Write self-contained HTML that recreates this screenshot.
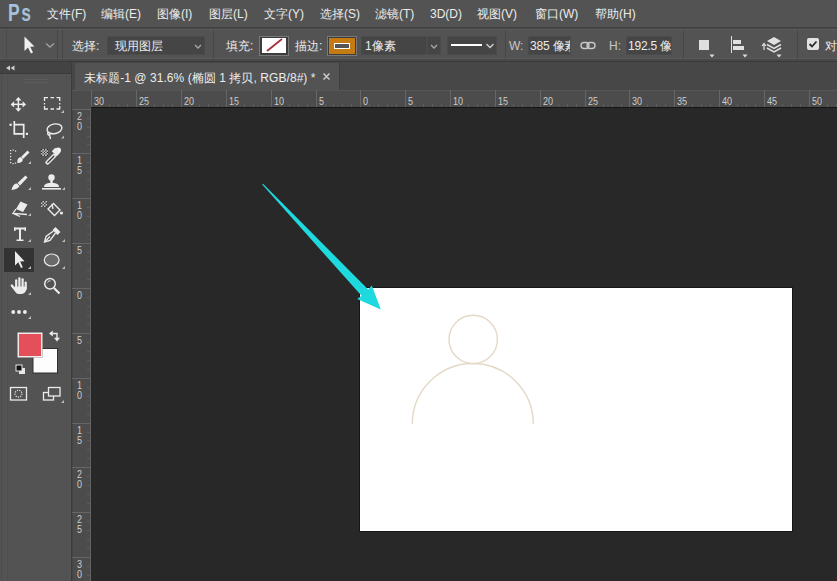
<!DOCTYPE html>
<html><head><meta charset="utf-8">
<style>
*{margin:0;padding:0;box-sizing:border-box}
html,body{width:837px;height:581px;overflow:hidden;background:#282828;font-family:"Liberation Sans",sans-serif;color:#e8e8e8}
.a{position:absolute}
#menubar{left:0;top:0;width:837px;height:27px;background:#535353}
#menubar .m{position:absolute;top:7px;font-size:12px;line-height:14px;color:#ececec;white-space:nowrap}
#optbar{left:0;top:27px;width:837px;height:35px;background:#535353;border-top:1px solid #404040;border-bottom:1px solid #3a3a3a}
#tools{left:0;top:62px;width:72px;height:519px;background:#535353}
#tabrow{left:72px;top:62px;width:765px;height:29px;background:#474747}
#rulertop{left:91px;top:90px;width:746px;height:18px;background:#4c4c4c;border-bottom:1px solid #151515;overflow:hidden}
#rulerleft{left:72px;top:108px;width:19px;height:473px;background:#4c4c4c;overflow:hidden}
#corner{left:72px;top:90px;width:19px;height:18px;background:#4c4c4c;border-top:1px solid #575757}
#canvasbg{left:91px;top:109px;width:746px;height:472px;background:#282828}
#doc{left:360px;top:288px;width:432px;height:243px;background:#fff}
.t12{font-size:12px;line-height:14px;white-space:nowrap;color:#ececec}
.box{background:#454545;border:1px solid #4b4b4b}
.tk{background:#666}
.tm{background:#5c5c5c}
.rl{font-size:10px;line-height:10px;color:#cdcdcd;transform:scaleX(0.9);transform-origin:0 0}
</style></head><body>
<div id="menubar" class="a">
  <div class="a" style="left:8px;top:1px;font-size:23px;line-height:24px;font-weight:bold;color:#a6c0da;letter-spacing:2px;transform:scaleX(0.76);transform-origin:0 0">Ps</div>
  <div class="m" style="left:47px">文件(F)</div>
  <div class="m" style="left:101px">编辑(E)</div>
  <div class="m" style="left:157px">图像(I)</div>
  <div class="m" style="left:209px">图层(L)</div>
  <div class="m" style="left:264px">文字(Y)</div>
  <div class="m" style="left:320px">选择(S)</div>
  <div class="m" style="left:375px">滤镜(T)</div>
  <div class="m" style="left:430px">3D(D)</div>
  <div class="m" style="left:477px">视图(V)</div>
  <div class="m" style="left:535px">窗口(W)</div>
  <div class="m" style="left:595px">帮助(H)</div>
</div>
<div id="optbar" class="a">
  <div class="a" style="left:0;top:0;width:837px;height:1px;background:#474747"></div>
  <div class="a" style="left:0;top:1px;width:837px;height:1px;background:#5a5a5a"></div>
  <div class="a" style="left:0;top:30px;width:837px;height:1px;background:#5a5a5a"></div>
  <div class="a" style="left:0;top:31px;width:837px;height:2px;background:#494949"></div>
  <div class="a" style="left:6px;top:1px;width:1px;height:31px;background:#4a4a4a"></div>
  <svg class="a" style="left:22px;top:7px" width="14" height="20" viewBox="0 0 14 20"><path d="M2.5 1.5 L2.5 16 L6 12.5 L9 18.5 L11 17.5 L8.2 11.8 L12.5 11.5 Z" fill="#f0f0f0"/></svg>
  <svg class="a" style="left:44px;top:13px" width="12" height="8" viewBox="0 0 12 8"><path d="M2 2.5 L6 6 L10 2.5" fill="none" stroke="#a0a0a0" stroke-width="1.4"/></svg>
  <div class="a" style="left:57px;top:2px;width:1px;height:29px;background:#474747"></div>
  <div class="a" style="left:62px;top:2px;width:1px;height:29px;background:#474747"></div>
  <div class="a t12" style="left:72px;top:11px">选择:</div>
  <div class="a box" style="left:107px;top:8px;width:98px;height:19px"></div>
  <div class="a t12" style="left:115px;top:11px">现用图层</div>
  <svg class="a" style="left:193px;top:14px" width="10" height="8" viewBox="0 0 10 8"><path d="M2 3 L5 6 L8 3" fill="none" stroke="#a9a9a9" stroke-width="1.3"/></svg>
  <div class="a" style="left:213px;top:2px;width:1px;height:29px;background:#474747"></div>
  <div class="a t12" style="left:226px;top:11px">填充:</div>
  <div class="a" style="left:259px;top:8px;width:30px;height:20px;border:1px solid #7a7a7a;background:#3c3c3c"></div>
  <div class="a" style="left:262px;top:10px;width:24px;height:15px;background:#fff"></div>
  <svg class="a" style="left:262px;top:10px" width="24" height="16"><line x1="5" y1="13" x2="20" y2="1" stroke="#a3303a" stroke-width="1.8"/></svg>
  <div class="a t12" style="left:295px;top:11px">描边:</div>
  <div class="a" style="left:327px;top:8px;width:30px;height:20px;border:1px solid #7a7a7a;background:#3c3c3c"></div>
  <div class="a" style="left:329px;top:10px;width:26px;height:16px;background:#c67a12"></div>
  <div class="a" style="left:334px;top:15px;width:16px;height:6px;border:1.5px solid #fff;background:#555"></div>
  <div class="a box" style="left:361px;top:8px;width:66px;height:19px"></div>
  <div class="a t12" style="left:365px;top:11px">1像素</div>
  <div class="a box" style="left:427px;top:8px;width:14px;height:19px"></div>
  <svg class="a" style="left:429px;top:14px" width="10" height="8" viewBox="0 0 10 8"><path d="M2 3 L5 6 L8 3" fill="none" stroke="#a9a9a9" stroke-width="1.3"/></svg>
  <div class="a box" style="left:447px;top:8px;width:50px;height:19px"></div>
  <div class="a" style="left:451px;top:16px;width:31px;height:2px;background:#fff"></div>
  <svg class="a" style="left:485px;top:14px" width="10" height="8" viewBox="0 0 10 8"><path d="M1.5 2 L5 5.5 L8.5 2" fill="none" stroke="#d0d0d0" stroke-width="1.4"/></svg>
  <div class="a" style="left:505px;top:2px;width:1px;height:29px;background:#474747"></div>
  <div class="a t12" style="left:509px;top:11px;color:#c8c8c8">W:</div>
  <div class="a box" style="left:528px;top:8px;width:43px;height:19px;overflow:hidden"><div class="a t12" style="left:1px;top:2px;letter-spacing:-0.2px">385 像素</div></div>
  <svg class="a" style="left:580px;top:13px" width="16" height="10" viewBox="0 0 16 10"><rect x="1" y="1.5" width="8" height="6" rx="3" fill="none" stroke="#c8c8c8" stroke-width="1.4"/><rect x="7" y="1.5" width="8" height="6" rx="3" fill="none" stroke="#c8c8c8" stroke-width="1.4"/></svg>
  <div class="a t12" style="left:609px;top:11px;color:#c8c8c8">H:</div>
  <div class="a box" style="left:626px;top:8px;width:46px;height:19px;overflow:hidden"><div class="a t12" style="left:1px;top:2px;letter-spacing:-0.2px">192.5 像素</div></div>
  <div class="a" style="left:683px;top:2px;width:1px;height:29px;background:#474747"></div>
  <div class="a" style="left:699px;top:12px;width:10px;height:10px;background:#e0e0e0"></div>
  <svg class="a" style="left:709px;top:26px" width="6" height="4"><path d="M0.5 0.5 L5.5 0.5 L3 3.5Z" fill="#ddd"/></svg>
  <div class="a" style="left:731px;top:8px;width:1px;height:17px;background:#e0e0e0"></div>
  <div class="a" style="left:733px;top:12px;width:8px;height:4px;background:#e0e0e0"></div>
  <div class="a" style="left:733px;top:18px;width:11px;height:4px;background:#e0e0e0"></div>
  <svg class="a" style="left:742px;top:26px" width="6" height="4"><path d="M0.5 0.5 L5.5 0.5 L3 3.5Z" fill="#ddd"/></svg>
  <svg class="a" style="left:761px;top:8px" width="24" height="20" viewBox="0 0 24 20"><path d="M13 1 L20 5 L13 9 L6 5Z" fill="#e0e0e0"/><path d="M6 8.5 L13 12.5 L20 8.5" fill="none" stroke="#e0e0e0" stroke-width="1.5"/><path d="M6 12 L13 16 L20 12" fill="none" stroke="#e0e0e0" stroke-width="1.5"/><path d="M3 14 L3 8 M1 10 L3 7.5 L5 10" fill="none" stroke="#e0e0e0" stroke-width="1.2"/></svg>
  <svg class="a" style="left:776px;top:26px" width="6" height="4"><path d="M0.5 0.5 L5.5 0.5 L3 3.5Z" fill="#ddd"/></svg>
  <div class="a" style="left:797px;top:2px;width:1px;height:29px;background:#474747"></div>
  <div class="a" style="left:807px;top:10px;width:12px;height:12px;background:#e2e2e2;border-radius:2px"></div>
  <svg class="a" style="left:807px;top:10px" width="12" height="12"><path d="M2.5 6 L5 8.5 L9.5 3.5" fill="none" stroke="#2a2a2a" stroke-width="1.8"/></svg>
  <div class="a t12" style="left:825px;top:11px">对齐边缘</div>
</div>
<div id="tools" class="a">
<svg class="a" style="left:0;top:0" width="72" height="519" viewBox="0 62 72 519">
  <rect x="0" y="62" width="72" height="12" fill="#434343"/>
  <rect x="0" y="73" width="72" height="1" fill="#3a3a3a"/>
  <rect x="71" y="62" width="1" height="519" fill="#3c3c3c"/>
  <rect x="1" y="74" width="1" height="507" fill="#4c4c4c"/>
  <rect x="7" y="75" width="1" height="506" fill="#4f4f4f"/>
  <rect x="66" y="75" width="1" height="506" fill="#4f4f4f"/>
  <path d="M6 68 L10 65.5 L10 70.5Z M10.5 68 L14.5 65.5 L14.5 70.5Z" fill="#cfcfcf"/>
  <rect x="24" y="79" width="24" height="1" fill="#5c5c5c"/>
  <rect x="24" y="82" width="24" height="1" fill="#5c5c5c"/>
  <!-- move -->
  <g fill="#ececec">
    <rect x="17.6" y="99" width="1.5" height="11"/>
    <rect x="12.5" y="103.6" width="11.5" height="1.5"/>
    <path d="M18.35 97 L21.5 100.5 L15.2 100.5Z M18.35 111.8 L21.5 108.3 L15.2 108.3Z M10.6 104.4 L14.1 101.2 L14.1 107.6Z M26.1 104.4 L22.6 101.2 L22.6 107.6Z"/>
  </g>
  <!-- marquee -->
  <g fill="none" stroke="#ececec" stroke-width="1.3">
    <path d="M44.5 101 L44.5 97.6 L48 97.6 M50.5 97.6 L54 97.6 M56.5 97.6 L59.7 97.6 L59.7 101 M59.7 103 L59.7 104.5 M59.7 106 L59.7 109 L56.5 109 M54 109 L50.5 109 M48 109 L44.5 109 L44.5 106 M44.5 104.5 L44.5 103"/>
  </g>
  <path d="M64 110 L64 113 L61 113Z" fill="#bdbdbd"/>
  <!-- crop -->
  <g fill="none" stroke="#ececec" stroke-width="1.7">
    <path d="M14.3 121 L14.3 133.8 L23.7 133.8"/>
    <path d="M14.3 124.7 L23.7 124.7 L23.7 138"/>
  </g>
  <rect x="9.5" y="123.7" width="2.2" height="2.2" fill="#ececec"/>
  <rect x="25.8" y="132.8" width="2.2" height="2.2" fill="#ececec"/>
  <!-- lasso -->
  <g fill="none" stroke="#ececec" stroke-width="1.4">
    <ellipse cx="54.5" cy="128.8" rx="7.5" ry="4.8" transform="rotate(-12 54.5 128.8)"/>
    <path d="M48 132 C47 135 49 136 50 134 M49.5 134.5 L50.5 139"/>
  </g>
  <path d="M64 135.5 L64 138.5 L61 138.5Z" fill="#bdbdbd"/>
  <!-- quick select -->
  <g fill="#ececec">
    <rect x="10" y="150" width="1.2" height="1.2"/><rect x="10" y="153" width="1.2" height="1.2"/><rect x="10" y="156" width="1.2" height="1.2"/><rect x="10" y="159" width="1.2" height="1.2"/><rect x="10" y="162" width="1.2" height="1.2"/>
    <rect x="12.5" y="149.5" width="1.2" height="1.2"/><rect x="15" y="150.5" width="1.2" height="1.2"/><rect x="12.5" y="163" width="1.2" height="1.2"/><rect x="15" y="162.5" width="1.2" height="1.2"/>
    <path d="M27.5 150.5 L29.5 152.5 L23 159 L21 157Z"/>
    <path d="M21 157.3 C18 157.3 17 160 17.5 163 C20.5 163 23 161.5 22.8 159.2Z"/>
  </g>
  <path d="M31 161 L31 164 L28 164Z" fill="#bdbdbd"/>
  <!-- eyedropper -->
  <g>
    <rect x="41" y="149" width="7" height="7" fill="#f0f0f0"/>
    <path d="M41 149h1.4v1.4h-1.4z M43.8 149h1.4v1.4h-1.4z M46.6 149h1.4v1.4h-1.4z M42.4 150.4h1.4v1.4h-1.4z M45.2 150.4h1.4v1.4h-1.4z M41 151.8h1.4v1.4h-1.4z M43.8 151.8h1.4v1.4h-1.4z M46.6 151.8h1.4v1.4h-1.4z M42.4 153.2h1.4v1.4h-1.4z M45.2 153.2h1.4v1.4h-1.4z M41 154.6h1.4v1.4h-1.4z M43.8 154.6h1.4v1.4h-1.4z M46.6 154.6h1.4v1.4h-1.4z" fill="#222"/>
    <circle cx="58.2" cy="150.3" r="2.8" fill="#f2f2f2"/>
    <path d="M51.8 151.2 L55.2 147.8 L60.2 152.8 L56.8 156.2Z" fill="#ececec"/>
    <path d="M54.5 155.5 L47.5 162.5" stroke="#e6e6e6" stroke-width="4.2" stroke-linecap="round"/>
    <path d="M53.8 156.2 L47.8 162.2" stroke="#3a3a3a" stroke-width="1.3" stroke-linecap="round"/>
  </g>
  <!-- brush -->
  <g fill="#ececec">
    <path d="M25.5 175.5 L27.5 177.5 L20 185.5 L17.5 183Z"/>
    <path d="M17 183.5 C14 183.5 12.5 186 11.5 190 C15.5 189.5 18.5 188.5 19.5 186Z"/>
  </g>
  <path d="M31 187 L31 190 L28 190Z" fill="#bdbdbd"/>
  <!-- stamp -->
  <g fill="#ececec">
    <circle cx="51.5" cy="177.5" r="3.2"/>
    <rect x="50.3" y="179" width="2.4" height="4"/>
    <path d="M44 187 C44 184 47 183 50 183 L53 183 C56 183 59 184 59 187Z"/>
    <rect x="42" y="188" width="19" height="1.6"/>
  </g>
  <path d="M65 187 L65 190 L62 190Z" fill="#bdbdbd"/>
  <!-- eraser -->
  <g>
    <path d="M20.5 201.5 L27.5 204.5 L23 212 L16 209Z" fill="#ececec"/>
    <path d="M16 209 L13 213.5 L27 214.5 M13 213.5 L20 216.5" fill="none" stroke="#ececec" stroke-width="1.3"/>
  </g>
  <path d="M31 213 L31 216 L28 216Z" fill="#bdbdbd"/>
  <!-- bucket -->
  <g>
    <rect x="41" y="201" width="6" height="6" fill="#cfcfcf"/>
    <path d="M41 201h1.5v1.5h-1.5z M44 201h1.5v1.5h-1.5z M42.5 202.5h1.5v1.5h-1.5z M45.5 202.5h1.5v1.5h-1.5z M41 204h1.5v1.5h-1.5z M44 204h1.5v1.5h-1.5z M42.5 205.5h1.5v1.5h-1.5z M45.5 205.5h1.5v1.5h-1.5z" fill="#333"/>
    <path d="M53.5 203.5 L60 210 L54.5 215.5 L48 209Z" fill="none" stroke="#ececec" stroke-width="1.4"/>
    <path d="M52 204 L53 209" stroke="#ececec" stroke-width="1.3"/>
    <circle cx="61.5" cy="213" r="1.6" fill="#ececec"/>
  </g>
  <!-- T -->
  <g fill="#ececec">
    <rect x="14" y="227.5" width="12" height="2"/>
    <rect x="14" y="227.5" width="1.5" height="3.5"/>
    <rect x="24.5" y="227.5" width="1.5" height="3.5"/>
    <rect x="19" y="228" width="2" height="12"/>
    <rect x="16.5" y="239.5" width="7" height="1.5"/>
  </g>
  <path d="M31 239 L31 242 L28 242Z" fill="#bdbdbd"/>
  <!-- pen -->
  <g fill="none" stroke="#ececec" stroke-width="1.3">
    <path d="M55.5 228 L59.5 232 L57.5 234 L53.5 230Z" fill="#ececec"/>
    <path d="M53.5 231 L46 236.5 L44.5 242 L50 240.5 L55.5 233"/>
    <path d="M44.8 241.7 L50 236.5"/>
  </g>
  <path d="M65 239 L65 242 L62 242Z" fill="#bdbdbd"/>
  <!-- selected path select -->
  <rect x="4" y="248" width="30" height="24" fill="#333333"/>
  <path d="M15 251 L15 265.5 L18.3 262.2 L21 268 L22.8 267.2 L20.2 261.5 L24.5 261.3Z" fill="#ececec"/>
  <path d="M31 266 L31 269 L28 269Z" fill="#bdbdbd"/>
  <!-- ellipse -->
  <ellipse cx="51.7" cy="260" rx="7.4" ry="6" fill="#6a6a6a" stroke="#ececec" stroke-width="1.2"/>
  <path d="M65 266 L65 269 L62 269Z" fill="#bdbdbd"/>
  <!-- hand -->
  <g stroke="#ececec" stroke-linecap="round" fill="none">
    <path d="M16.2 280.3 L16.2 288" stroke-width="2.2"/>
    <path d="M19.4 278.3 L19.4 288" stroke-width="2.2"/>
    <path d="M22.6 279.3 L22.6 288" stroke-width="2.2"/>
    <path d="M25.7 282.6 L25.7 289" stroke-width="2.2"/>
    <path d="M11.8 285.6 L15.5 290" stroke-width="2.4"/>
  </g>
  <path d="M14.8 286.5 L26.8 286.5 L26.2 290 C25.5 292.5 23.5 294 21 294 L19 294 C16.5 294 15 292 14.5 290Z" fill="#ececec"/>
  <path d="M31 292 L31 295 L28 295Z" fill="#bdbdbd"/>
  <!-- zoom -->
  <g fill="none" stroke="#ececec" stroke-width="1.5">
    <circle cx="50" cy="283.8" r="5.3"/>
    <path d="M54 288 L59.5 293.5" stroke-width="2.2"/>
    <path d="M47.5 282.5 C48 281 49.5 280.5 50.5 281" stroke-width="1"/>
  </g>
  <!-- dots -->
  <g fill="#ececec"><circle cx="13.2" cy="312" r="1.9"/><circle cx="19" cy="312" r="1.9"/><circle cx="24.9" cy="312" r="1.9"/></g>
  <path d="M31 316 L31 319 L28 319Z" fill="#bdbdbd"/>
  <!-- colors -->
  <rect x="33" y="348.5" width="24.5" height="24.5" fill="#fdfdfd" stroke="#303030" stroke-width="1"/>
  <rect x="17.5" y="332.5" width="25" height="25" fill="#303030"/>
  <rect x="18.2" y="333.2" width="23.6" height="23.6" fill="#e3505a" stroke="#fafafa" stroke-width="1.4"/>
  <path d="M52.5 333.5 L57 333.5 L57 338" fill="none" stroke="#ececec" stroke-width="1.4"/>
  <path d="M49 333.5 L52.8 330.5 L52.8 336.5Z" fill="#ececec"/>
  <path d="M57 341.5 L54 337.7 L60 337.7Z" fill="#ececec"/>
  <rect x="19" y="368" width="6" height="6" fill="#e8e8e8"/>
  <rect x="16" y="365" width="6" height="6" fill="#111" stroke="#e8e8e8" stroke-width="1"/>
  <!-- quick mask -->
  <rect x="10.5" y="387.5" width="16" height="12.5" fill="none" stroke="#ececec" stroke-width="1.3"/>
  <circle cx="18.5" cy="393.7" r="3.5" fill="none" stroke="#ececec" stroke-width="1.2" stroke-dasharray="1.2 1.2"/>
  <!-- screen mode -->
  <rect x="43.5" y="392.5" width="10" height="7.5" fill="#535353" stroke="#ececec" stroke-width="1.3"/>
  <rect x="48.5" y="387.5" width="11.5" height="8.5" fill="#535353" stroke="#ececec" stroke-width="1.3"/>
  <path d="M64 400 L64 403 L61 403Z" fill="#bdbdbd"/>
</svg>
</div>
<div id="tabrow" class="a">
  <div class="a" style="left:3px;top:1px;width:265px;height:27px;background:#535353;border-right:1px solid #3f3f3f"></div>
  <div class="a t12" style="left:12px;top:9px;color:#ececec;letter-spacing:0.06px">未标题-1 @ 31.6% (椭圆 1 拷贝, RGB/8#) *</div>
  <svg class="a" style="left:250px;top:10px" width="9" height="9" viewBox="0 0 9 9"><path d="M1.5 1.5 L7.5 7.5 M7.5 1.5 L1.5 7.5" stroke="#c8c8c8" stroke-width="1.5"/></svg>
</div>
<div id="rulertop" class="a">
<div class="a" style="left:0;top:0;width:746px;height:1px;background:#575757"></div>
<div class="a tk" style="left:0px;top:0;width:1px;height:17px"></div>
<div class="a rl" style="left:3px;top:7px">30</div>
<div class="a tm" style="left:9px;top:14px;width:1px;height:3px"></div>
<div class="a tm" style="left:18px;top:14px;width:1px;height:3px"></div>
<div class="a tm" style="left:27px;top:14px;width:1px;height:3px"></div>
<div class="a tm" style="left:36px;top:14px;width:1px;height:3px"></div>
<div class="a tk" style="left:45px;top:0;width:1px;height:17px"></div>
<div class="a rl" style="left:48px;top:7px">25</div>
<div class="a tm" style="left:54px;top:14px;width:1px;height:3px"></div>
<div class="a tm" style="left:63px;top:14px;width:1px;height:3px"></div>
<div class="a tm" style="left:72px;top:14px;width:1px;height:3px"></div>
<div class="a tm" style="left:81px;top:14px;width:1px;height:3px"></div>
<div class="a tk" style="left:90px;top:0;width:1px;height:17px"></div>
<div class="a rl" style="left:93px;top:7px">20</div>
<div class="a tm" style="left:99px;top:14px;width:1px;height:3px"></div>
<div class="a tm" style="left:108px;top:14px;width:1px;height:3px"></div>
<div class="a tm" style="left:117px;top:14px;width:1px;height:3px"></div>
<div class="a tm" style="left:126px;top:14px;width:1px;height:3px"></div>
<div class="a tk" style="left:135px;top:0;width:1px;height:17px"></div>
<div class="a rl" style="left:138px;top:7px">15</div>
<div class="a tm" style="left:144px;top:14px;width:1px;height:3px"></div>
<div class="a tm" style="left:153px;top:14px;width:1px;height:3px"></div>
<div class="a tm" style="left:162px;top:14px;width:1px;height:3px"></div>
<div class="a tm" style="left:171px;top:14px;width:1px;height:3px"></div>
<div class="a tk" style="left:180px;top:0;width:1px;height:17px"></div>
<div class="a rl" style="left:183px;top:7px">10</div>
<div class="a tm" style="left:189px;top:14px;width:1px;height:3px"></div>
<div class="a tm" style="left:198px;top:14px;width:1px;height:3px"></div>
<div class="a tm" style="left:207px;top:14px;width:1px;height:3px"></div>
<div class="a tm" style="left:216px;top:14px;width:1px;height:3px"></div>
<div class="a tk" style="left:225px;top:0;width:1px;height:17px"></div>
<div class="a rl" style="left:228px;top:7px">5</div>
<div class="a tm" style="left:234px;top:14px;width:1px;height:3px"></div>
<div class="a tm" style="left:242px;top:14px;width:1px;height:3px"></div>
<div class="a tm" style="left:251px;top:14px;width:1px;height:3px"></div>
<div class="a tm" style="left:260px;top:14px;width:1px;height:3px"></div>
<div class="a tk" style="left:269px;top:0;width:1px;height:17px"></div>
<div class="a rl" style="left:272px;top:7px">0</div>
<div class="a tm" style="left:278px;top:14px;width:1px;height:3px"></div>
<div class="a tm" style="left:287px;top:14px;width:1px;height:3px"></div>
<div class="a tm" style="left:296px;top:14px;width:1px;height:3px"></div>
<div class="a tm" style="left:305px;top:14px;width:1px;height:3px"></div>
<div class="a tk" style="left:314px;top:0;width:1px;height:17px"></div>
<div class="a rl" style="left:317px;top:7px">5</div>
<div class="a tm" style="left:323px;top:14px;width:1px;height:3px"></div>
<div class="a tm" style="left:332px;top:14px;width:1px;height:3px"></div>
<div class="a tm" style="left:341px;top:14px;width:1px;height:3px"></div>
<div class="a tm" style="left:350px;top:14px;width:1px;height:3px"></div>
<div class="a tk" style="left:359px;top:0;width:1px;height:17px"></div>
<div class="a rl" style="left:362px;top:7px">10</div>
<div class="a tm" style="left:368px;top:14px;width:1px;height:3px"></div>
<div class="a tm" style="left:377px;top:14px;width:1px;height:3px"></div>
<div class="a tm" style="left:386px;top:14px;width:1px;height:3px"></div>
<div class="a tm" style="left:395px;top:14px;width:1px;height:3px"></div>
<div class="a tk" style="left:404px;top:0;width:1px;height:17px"></div>
<div class="a rl" style="left:407px;top:7px">15</div>
<div class="a tm" style="left:413px;top:14px;width:1px;height:3px"></div>
<div class="a tm" style="left:422px;top:14px;width:1px;height:3px"></div>
<div class="a tm" style="left:431px;top:14px;width:1px;height:3px"></div>
<div class="a tm" style="left:440px;top:14px;width:1px;height:3px"></div>
<div class="a tk" style="left:449px;top:0;width:1px;height:17px"></div>
<div class="a rl" style="left:452px;top:7px">20</div>
<div class="a tm" style="left:458px;top:14px;width:1px;height:3px"></div>
<div class="a tm" style="left:467px;top:14px;width:1px;height:3px"></div>
<div class="a tm" style="left:476px;top:14px;width:1px;height:3px"></div>
<div class="a tm" style="left:485px;top:14px;width:1px;height:3px"></div>
<div class="a tk" style="left:494px;top:0;width:1px;height:17px"></div>
<div class="a rl" style="left:497px;top:7px">25</div>
<div class="a tm" style="left:503px;top:14px;width:1px;height:3px"></div>
<div class="a tm" style="left:512px;top:14px;width:1px;height:3px"></div>
<div class="a tm" style="left:521px;top:14px;width:1px;height:3px"></div>
<div class="a tm" style="left:530px;top:14px;width:1px;height:3px"></div>
<div class="a tk" style="left:538px;top:0;width:1px;height:17px"></div>
<div class="a rl" style="left:541px;top:7px">30</div>
<div class="a tm" style="left:547px;top:14px;width:1px;height:3px"></div>
<div class="a tm" style="left:556px;top:14px;width:1px;height:3px"></div>
<div class="a tm" style="left:565px;top:14px;width:1px;height:3px"></div>
<div class="a tm" style="left:574px;top:14px;width:1px;height:3px"></div>
<div class="a tk" style="left:583px;top:0;width:1px;height:17px"></div>
<div class="a rl" style="left:586px;top:7px">35</div>
<div class="a tm" style="left:592px;top:14px;width:1px;height:3px"></div>
<div class="a tm" style="left:601px;top:14px;width:1px;height:3px"></div>
<div class="a tm" style="left:610px;top:14px;width:1px;height:3px"></div>
<div class="a tm" style="left:619px;top:14px;width:1px;height:3px"></div>
<div class="a tk" style="left:628px;top:0;width:1px;height:17px"></div>
<div class="a rl" style="left:631px;top:7px">40</div>
<div class="a tm" style="left:637px;top:14px;width:1px;height:3px"></div>
<div class="a tm" style="left:646px;top:14px;width:1px;height:3px"></div>
<div class="a tm" style="left:655px;top:14px;width:1px;height:3px"></div>
<div class="a tm" style="left:664px;top:14px;width:1px;height:3px"></div>
<div class="a tk" style="left:673px;top:0;width:1px;height:17px"></div>
<div class="a rl" style="left:676px;top:7px">45</div>
<div class="a tm" style="left:682px;top:14px;width:1px;height:3px"></div>
<div class="a tm" style="left:691px;top:14px;width:1px;height:3px"></div>
<div class="a tm" style="left:700px;top:14px;width:1px;height:3px"></div>
<div class="a tm" style="left:709px;top:14px;width:1px;height:3px"></div>
<div class="a tk" style="left:718px;top:0;width:1px;height:17px"></div>
<div class="a rl" style="left:721px;top:7px">50</div>
<div class="a tm" style="left:727px;top:14px;width:1px;height:3px"></div>
<div class="a tm" style="left:736px;top:14px;width:1px;height:3px"></div>
<div class="a tm" style="left:745px;top:14px;width:1px;height:3px"></div>
</div>
<div id="rulerleft" class="a">
<div class="a" style="left:18px;top:0;width:1px;height:473px;background:#626262"></div><div class="a" style="left:0;top:0;width:1px;height:473px;background:#444"></div>
<div class="a tk" style="left:0;top:1px;width:18px;height:1px"></div>
<div class="a rl" style="left:5px;top:4px">2</div>
<div class="a rl" style="left:5px;top:14px">0</div>
<div class="a tm" style="left:15px;top:10px;width:4px;height:1px"></div>
<div class="a tm" style="left:15px;top:19px;width:4px;height:1px"></div>
<div class="a tm" style="left:15px;top:28px;width:4px;height:1px"></div>
<div class="a tm" style="left:15px;top:36px;width:4px;height:1px"></div>
<div class="a tk" style="left:0;top:45px;width:18px;height:1px"></div>
<div class="a rl" style="left:5px;top:48px">1</div>
<div class="a rl" style="left:5px;top:58px">5</div>
<div class="a tm" style="left:15px;top:54px;width:4px;height:1px"></div>
<div class="a tm" style="left:15px;top:63px;width:4px;height:1px"></div>
<div class="a tm" style="left:15px;top:72px;width:4px;height:1px"></div>
<div class="a tm" style="left:15px;top:81px;width:4px;height:1px"></div>
<div class="a tk" style="left:0;top:90px;width:18px;height:1px"></div>
<div class="a rl" style="left:5px;top:93px">1</div>
<div class="a rl" style="left:5px;top:103px">0</div>
<div class="a tm" style="left:15px;top:99px;width:4px;height:1px"></div>
<div class="a tm" style="left:15px;top:108px;width:4px;height:1px"></div>
<div class="a tm" style="left:15px;top:117px;width:4px;height:1px"></div>
<div class="a tm" style="left:15px;top:126px;width:4px;height:1px"></div>
<div class="a tk" style="left:0;top:135px;width:18px;height:1px"></div>
<div class="a rl" style="left:5px;top:138px">5</div>
<div class="a tm" style="left:15px;top:144px;width:4px;height:1px"></div>
<div class="a tm" style="left:15px;top:153px;width:4px;height:1px"></div>
<div class="a tm" style="left:15px;top:162px;width:4px;height:1px"></div>
<div class="a tm" style="left:15px;top:171px;width:4px;height:1px"></div>
<div class="a tk" style="left:0;top:180px;width:18px;height:1px"></div>
<div class="a rl" style="left:5px;top:183px">0</div>
<div class="a tm" style="left:15px;top:189px;width:4px;height:1px"></div>
<div class="a tm" style="left:15px;top:198px;width:4px;height:1px"></div>
<div class="a tm" style="left:15px;top:207px;width:4px;height:1px"></div>
<div class="a tm" style="left:15px;top:216px;width:4px;height:1px"></div>
<div class="a tk" style="left:0;top:225px;width:18px;height:1px"></div>
<div class="a rl" style="left:5px;top:228px">5</div>
<div class="a tm" style="left:15px;top:234px;width:4px;height:1px"></div>
<div class="a tm" style="left:15px;top:243px;width:4px;height:1px"></div>
<div class="a tm" style="left:15px;top:252px;width:4px;height:1px"></div>
<div class="a tm" style="left:15px;top:261px;width:4px;height:1px"></div>
<div class="a tk" style="left:0;top:270px;width:18px;height:1px"></div>
<div class="a rl" style="left:5px;top:273px">1</div>
<div class="a rl" style="left:5px;top:283px">0</div>
<div class="a tm" style="left:15px;top:279px;width:4px;height:1px"></div>
<div class="a tm" style="left:15px;top:288px;width:4px;height:1px"></div>
<div class="a tm" style="left:15px;top:297px;width:4px;height:1px"></div>
<div class="a tm" style="left:15px;top:306px;width:4px;height:1px"></div>
<div class="a tk" style="left:0;top:315px;width:18px;height:1px"></div>
<div class="a rl" style="left:5px;top:318px">1</div>
<div class="a rl" style="left:5px;top:328px">5</div>
<div class="a tm" style="left:15px;top:324px;width:4px;height:1px"></div>
<div class="a tm" style="left:15px;top:332px;width:4px;height:1px"></div>
<div class="a tm" style="left:15px;top:341px;width:4px;height:1px"></div>
<div class="a tm" style="left:15px;top:350px;width:4px;height:1px"></div>
<div class="a tk" style="left:0;top:359px;width:18px;height:1px"></div>
<div class="a rl" style="left:5px;top:362px">2</div>
<div class="a rl" style="left:5px;top:372px">0</div>
<div class="a tm" style="left:15px;top:368px;width:4px;height:1px"></div>
<div class="a tm" style="left:15px;top:377px;width:4px;height:1px"></div>
<div class="a tm" style="left:15px;top:386px;width:4px;height:1px"></div>
<div class="a tm" style="left:15px;top:395px;width:4px;height:1px"></div>
<div class="a tk" style="left:0;top:404px;width:18px;height:1px"></div>
<div class="a rl" style="left:5px;top:407px">2</div>
<div class="a rl" style="left:5px;top:417px">5</div>
<div class="a tm" style="left:15px;top:413px;width:4px;height:1px"></div>
<div class="a tm" style="left:15px;top:422px;width:4px;height:1px"></div>
<div class="a tm" style="left:15px;top:431px;width:4px;height:1px"></div>
<div class="a tm" style="left:15px;top:440px;width:4px;height:1px"></div>
<div class="a tk" style="left:0;top:449px;width:18px;height:1px"></div>
<div class="a rl" style="left:5px;top:452px">3</div>
<div class="a rl" style="left:5px;top:462px">0</div>
<div class="a tm" style="left:15px;top:458px;width:4px;height:1px"></div>
<div class="a tm" style="left:15px;top:467px;width:4px;height:1px"></div>
</div>
<div id="corner" class="a"></div>
<div id="canvasbg" class="a"></div>
<div id="doc" class="a"></div>
<svg class="a" style="left:0;top:0" width="837" height="581">
  <rect x="359.5" y="287.5" width="433" height="244" fill="none" stroke="#161616" stroke-width="1"/>
  <rect x="360" y="288" width="432" height="243" fill="#fff"/>
  <circle cx="473.2" cy="339.5" r="24.2" fill="none" stroke="#e4d9c6" stroke-width="1.4"/>
  <path d="M412.3 424 A60.5 60.5 0 0 1 533.3 424" fill="none" stroke="#e4d9c6" stroke-width="1.4"/>
  <path id="arrow" d="M263.0 183.8 L368.2 289.4 L371.8 285.4 L380.8 309.5 L357.2 299.1 L361.5 295.7 L262.2 184.6 Z" fill="#1ed9de"/>
</svg>
</body></html>
